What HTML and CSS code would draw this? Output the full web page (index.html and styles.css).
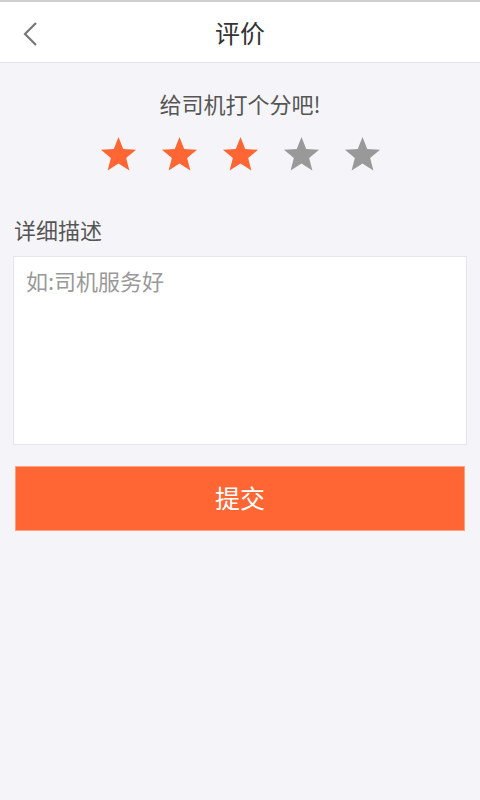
FILE: index.html
```html
<!DOCTYPE html>
<html>
  <head>
    <meta charset="UTF-8">
    <title>评价</title>
    <link rel="stylesheet" href="styles.css">
  </head>
  <body>
    <div class="header">
      <span class="back">
        <svg width="18" height="26" viewBox="0 0 18 26">
          <polyline points="15,2 4,13 15,24" fill="none" stroke="#777" stroke-width="2.2"/>
        </svg>
      </span>
      <h1>评价</h1>
    </div>
    <div class="content">
      <h2>给司机打个分吧!</h2>
      <div class="stars">
        <svg class="star on" viewBox="0 0 24 24"><polygon points="12,1.2 14.9,8.6 22.8,9.1 16.7,14.2 18.7,21.9 12,17.6 5.3,21.9 7.3,14.2 1.2,9.1 9.1,8.6"/></svg>
        <svg class="star on" viewBox="0 0 24 24"><polygon points="12,1.2 14.9,8.6 22.8,9.1 16.7,14.2 18.7,21.9 12,17.6 5.3,21.9 7.3,14.2 1.2,9.1 9.1,8.6"/></svg>
        <svg class="star on" viewBox="0 0 24 24"><polygon points="12,1.2 14.9,8.6 22.8,9.1 16.7,14.2 18.7,21.9 12,17.6 5.3,21.9 7.3,14.2 1.2,9.1 9.1,8.6"/></svg>
        <svg class="star" viewBox="0 0 24 24"><polygon points="12,1.2 14.9,8.6 22.8,9.1 16.7,14.2 18.7,21.9 12,17.6 5.3,21.9 7.3,14.2 1.2,9.1 9.1,8.6"/></svg>
        <svg class="star" viewBox="0 0 24 24"><polygon points="12,1.2 14.9,8.6 22.8,9.1 16.7,14.2 18.7,21.9 12,17.6 5.3,21.9 7.3,14.2 1.2,9.1 9.1,8.6"/></svg>
      </div>
      <label>详细描述</label>
      <textarea placeholder="如:司机服务好"></textarea>
      <button type="button">提交</button>
    </div>
  </body>
</html>
```
FILE: styles.css
```css
* {
  box-sizing: border-box;
}
body {
  margin: 0;
  background-color: #f5f5f9;
  font-family: "Noto Sans CJK SC", "Noto Sans", sans-serif;
  color: #555;
  min-height: 800px;
}
.header {
  position: relative;
  height: 63px;
  background-color: white;
  border-top: 2px solid #cfcfcf;
  border-bottom: 1px solid #e3e3e8;
  display: flex;
  align-items: center;
  justify-content: center;
}
.header h1 {
  margin: 0;
  font-size: 25px;
  font-weight: normal;
  color: #333;
}
.back {
  position: absolute;
  left: 21px;
  top: 19px;
}
.content {
  padding: 0 13px;
}
h2 {
  margin: 25px 0 0 0;
  font-size: 22px;
  font-weight: normal;
  text-align: center;
  line-height: 30px;
}
.stars {
  display: flex;
  justify-content: center;
  gap: 22px;
  margin-top: 17px;
}
.star {
  width: 39px;
  height: 39px;
  fill: #999;
}
.star.on {
  fill: #ff6633;
}
label {
  display: block;
  margin-top: 40px;
  font-size: 22px;
  line-height: 30px;
  padding-left: 1px;
}
textarea {
  display: block;
  width: 100%;
  height: 189px;
  margin-top: 12px;
  padding: 7px 12px;
  border: 1px solid #e5e5ea;
  background-color: white;
  font-family: inherit;
  font-size: 22px;
  resize: none;
  outline: none;
}
textarea::placeholder {
  color: #999;
}
button {
  display: block;
  width: 450px;
  height: 65px;
  margin: 21px 0 0 2px;
  padding: 0 0 3px 0;
  border: 1px solid #ffa080;
  background-color: #ff6633;
  color: white;
  font-family: inherit;
  font-size: 25px;
}
```
